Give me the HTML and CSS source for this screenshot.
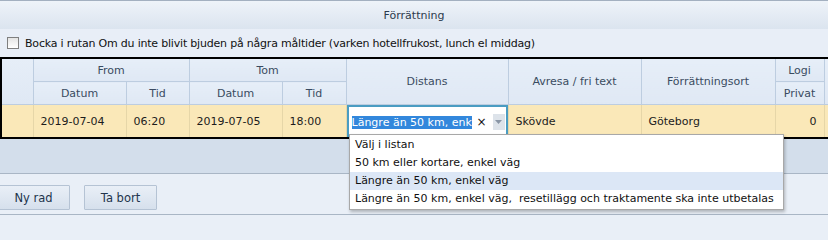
FILE: index.html
```html
<!DOCTYPE html>
<html lang="sv">
<head>
<meta charset="utf-8">
<title>Förrättning</title>
<link rel="stylesheet" href="styles.css">
</head>
<body>
<div class="page">
  <div class="title">Förrättning</div>
  <div class="checkrow">
    <span class="checkbox"></span>
    <span class="checklabel">Bocka i rutan Om du inte blivit bjuden på några måltider (varken hotellfrukost, lunch el middag)</span>
  </div>
  <div class="gridwrap">
    <table class="grid">
      <colgroup>
        <col class="c-sel"><col class="c-date"><col class="c-time"><col class="c-date"><col class="c-time2">
        <col class="c-dist"><col class="c-avr"><col class="c-ort"><col class="c-logi"><col class="c-rest">
      </colgroup>
      <thead>
        <tr class="h1">
          <th rowspan="2"></th>
          <th colspan="2">From</th>
          <th colspan="2">Tom</th>
          <th rowspan="2">Distans</th>
          <th rowspan="2">Avresa / fri text</th>
          <th rowspan="2">Förrättningsort</th>
          <th>Logi</th>
          <th rowspan="2"></th>
        </tr>
        <tr class="h2">
          <th>Datum</th>
          <th>Tid</th>
          <th>Datum</th>
          <th>Tid</th>
          <th>Privat</th>
        </tr>
      </thead>
      <tbody>
        <tr class="datarow">
          <td></td>
          <td>2019-07-04</td>
          <td>06:20</td>
          <td>2019-07-05</td>
          <td>18:00</td>
          <td class="editcell">
            <div class="combo">
              <span class="combotext"><span class="sel">Längre än 50 km, enk</span></span>
              <span class="clear">×</span>
              <span class="arrow"><svg width="7" height="4" viewBox="0 0 7 4"><path d="M0 0h7L3.5 4z" fill="#8a96a6"/></svg></span>
            </div>
          </td>
          <td>Skövde</td>
          <td>Göteborg</td>
          <td class="num">0</td>
          <td></td>
        </tr>
      </tbody>
    </table>
  </div>
  <div class="blank"></div>
  <div class="buttons">
    <button class="btn btn-first">Ny rad</button>
    <button class="btn">Ta bort</button>
  </div>
  <ul class="dropdown">
    <li>Välj i listan</li>
    <li>50 km eller kortare, enkel väg</li>
    <li class="hover">Längre än 50 km, enkel väg</li>
    <li>Längre än 50 km, enkel väg,&nbsp; resetillägg och traktamente ska inte utbetalas</li>
  </ul>
</div>
</body>
</html>
```

FILE: styles.css
```css
html, body {
  margin: 0;
  padding: 0;
}
body {
  width: 828px;
  height: 218px;
  overflow: hidden;
  background: #e9eff7;
  font-family: "DejaVu Sans", sans-serif;
  font-size: 11px;
  color: #1c1c1c;
}
.page {
  position: relative;
  width: 828px;
  height: 218px;
  overflow: hidden;
}
.title {
  height: 28px;
  line-height: 29px;
  border-top: 1px solid #a3b0c0;
  background: linear-gradient(#eef3f9, #dbe4ef);
  text-align: center;
  color: #2b3a4d;
}
.checkrow {
  height: 28px;
  display: flex;
  align-items: center;
  padding-left: 7px;
  gap: 6px;
  background: #e8eef7;
}
.checkbox {
  width: 10px;
  height: 10px;
  border: 1px solid #7f7f7f;
  background: linear-gradient(#e4e4e4, #ffffff);
}
.checklabel {
  color: #111;
  letter-spacing: -0.2px;
}
.gridwrap {
  width: 828px;
  overflow: hidden;
  border-top: 2px solid #000;
  border-bottom: 2px solid #000;
}
.grid {
  border-collapse: collapse;
  table-layout: fixed;
  width: 840px;
  border-left: 2px solid #000;
}
.c-sel { width: 32px; }
.c-date { width: 93px; }
.c-time { width: 63px; }
.c-time2 { width: 64px; }
.c-dist { width: 162px; }
.c-avr { width: 133px; }
.c-ort { width: 134px; }
.c-logi { width: 49px; }
.c-rest { width: 108px; }
.grid th {
  background: linear-gradient(#e6eef8, #dfe8f4);
  border: 1px solid #bdcde0;
  border-top: none;
  font-weight: normal;
  color: #3a4b61;
  padding: 0;
  text-align: center;
}
.h1 th { height: 22px; }
.h2 th { height: 22px; }
.grid td {
  background: #fae8b8;
  border-left: 1px solid #e6d6a8;
  border-right: 1px solid #e6d6a8;
  border-top: 1px solid #c9d5e3;
  height: 32px;
  padding: 0 0 0 7px;
  white-space: nowrap;
  color: #1c1c1c;
}
.grid td.num {
  text-align: right;
  padding: 0 7px 0 0;
}
.grid td.editcell {
  padding: 0;
  background: #ffffff;
}
.combo {
  height: 32px;
  box-sizing: border-box;
  border: 2px solid #4a9cc2;
  border-bottom: none;
  display: flex;
  align-items: center;
  background: #fff;
  padding-left: 3px;
}
.combotext {
  width: 122px;
  overflow: hidden;
  white-space: nowrap;
}
.sel {
  background: #3287dc;
  color: #fff;
  padding: 2px 0;
}
.clear {
  width: 14px;
  margin-left: 1px;
  font-size: 12px;
  color: #111;
  text-align: center;
}
.arrow {
  width: 12px;
  height: 16px;
  margin-left: 4px;
  background: #dde3ea;
  display: flex;
  align-items: center;
  justify-content: center;
}
.blank {
  height: 34px;
  background: #d3deeb;
  border-bottom: 1px solid #a9b6c5;
}
.buttons {
  height: 29px;
  padding-top: 11px;
  display: flex;
  align-items: flex-start;
  gap: 14px;
  border-bottom: 1px solid #a9b6c5;
}
.btn {
  font: inherit;
  font-size: 11.5px;
  color: #22344c;
  height: 25px;
  padding: 0;
  border: 1px solid #b5c3d4;
  border-radius: 1px;
  background: linear-gradient(#e9eff7, #d6e0ec);
  width: 73px;
}
.btn-first {
  margin-left: -3px;
}
.dropdown {
  position: absolute;
  left: 349px;
  top: 134px;
  width: 433px;
  margin: 0;
  padding: 1px 0 1px 0;
  list-style: none;
  background: #fff;
  border: 1px solid #a8a8a8;
  box-shadow: 1px 2px 3px rgba(0,0,0,0.25);
}
.dropdown li {
  height: 18px;
  line-height: 18px;
  padding-left: 5px;
  white-space: nowrap;
  color: #111;
}
.dropdown li.hover {
  background: #dce7f6;
}
```
